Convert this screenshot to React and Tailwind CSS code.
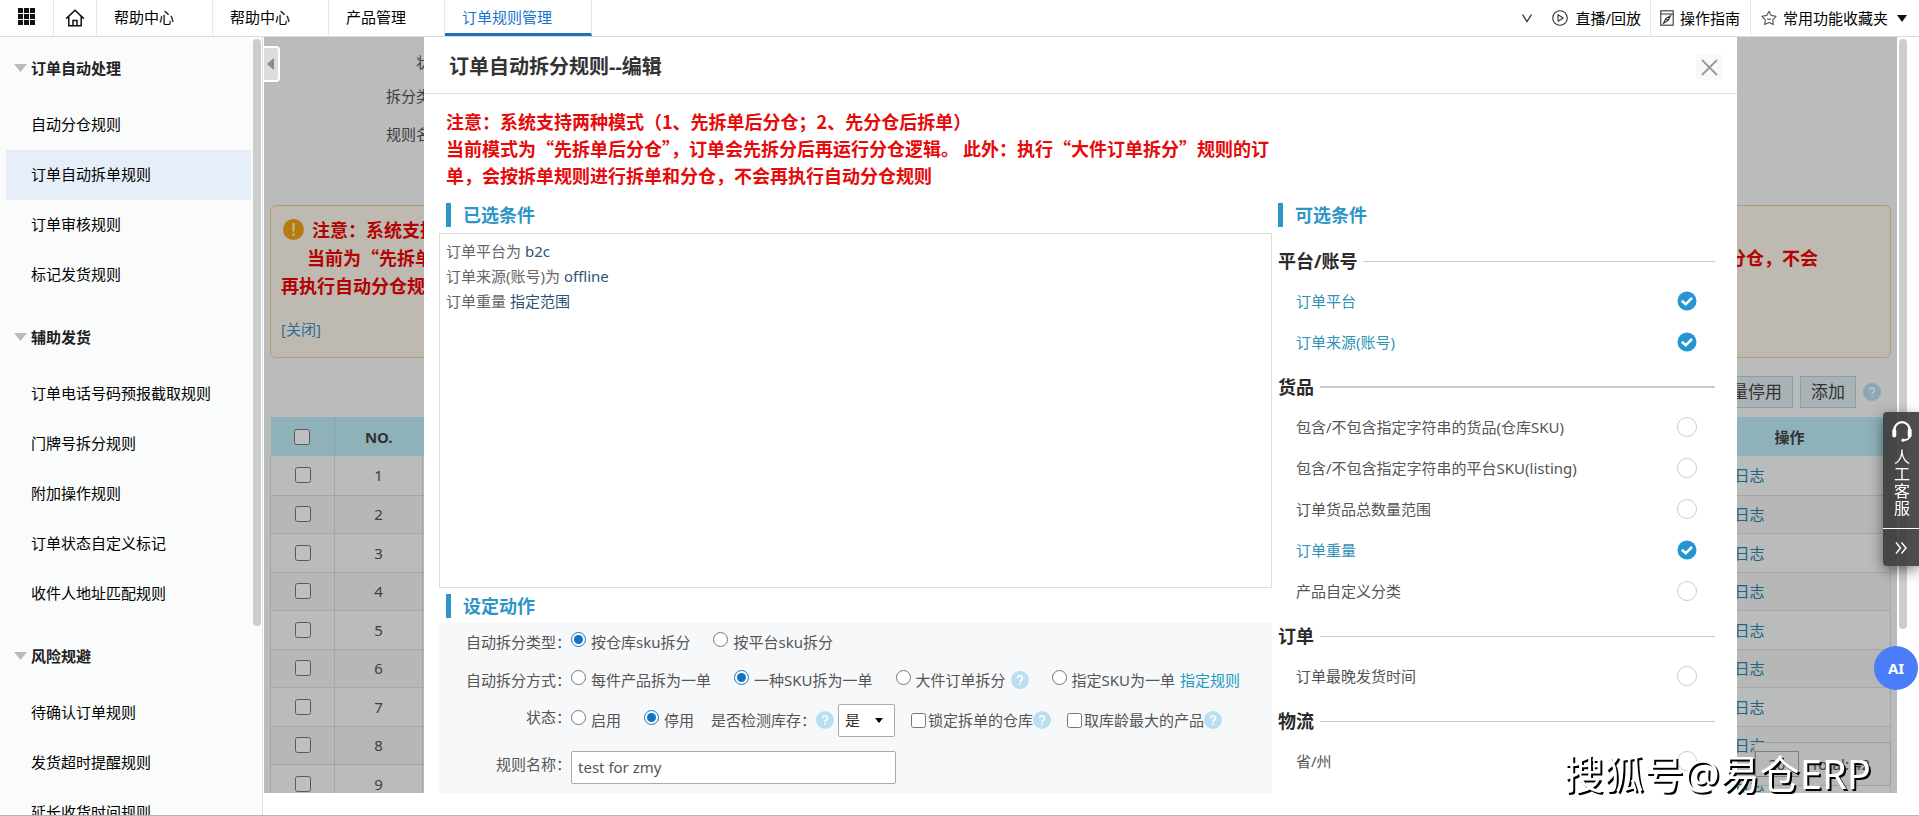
import { useState } from "react";

const tabs = ["帮助中心", "帮助中心", "产品管理"];

const menu = [
  {
    title: "订单自动处理",
    items: ["自动分仓规则", "订单自动拆单规则", "订单审核规则", "标记发货规则"],
  },
  {
    title: "辅助发货",
    items: [
      "订单电话号码预报截取规则",
      "门牌号拆分规则",
      "附加操作规则",
      "订单状态自定义标记",
      "收件人地址匹配规则",
    ],
  },
  {
    title: "风险规避",
    items: ["待确认订单规则", "发货超时提醒规则", "延长收货时间规则"],
  },
];

const conditionGroups = [
  { title: "平台/账号", items: ["订单平台", "订单来源(账号)"] },
  {
    title: "货品",
    thick: true,
    items: [
      "包含/不包含指定字符串的货品(仓库SKU)",
      "包含/不包含指定字符串的平台SKU(listing)",
      "订单货品总数量范围",
      "订单重量",
      "产品自定义分类",
    ],
  },
  { title: "订单", items: ["订单最晚发货时间"] },
  { title: "物流", items: ["省/州"] },
];

const rows = [1, 2, 3, 4, 5, 6, 7, 8, 9];

function HelpIcon() {
  return (
    <svg className="w-[18px] h-[18px] shrink-0" viewBox="0 0 18 18">
      <circle cx="9" cy="9" r="9" fill="#b9dff0" />
      <path
        d="M6.6 7.2a2.4 2.4 0 1 1 3.6 2c-.8.5-1.2.8-1.2 1.7"
        fill="none"
        stroke="#fff"
        strokeWidth="1.6"
      />
      <circle cx="9" cy="13" r="1" fill="#fff" />
    </svg>
  );
}

function Radio({ name, label, checked, onChange }) {
  return (
    <label className="flex items-center gap-[5px]">
      <input
        type="radio"
        name={name}
        checked={checked}
        onChange={onChange}
        className="w-[15px] h-[15px] mb-1.5 accent-[#1272c4]"
      />
      {label}
    </label>
  );
}

function SectionTitle({ children }) {
  return (
    <h3 className="flex items-center h-6 gap-3 text-lg font-bold text-[#2e95c8]">
      <span className="w-[5px] h-6 bg-[#2e95c8]" />
      {children}
    </h3>
  );
}

function TopBar() {
  return (
    <header className="flex h-[37px] shrink-0 border-b border-[#dcdcdc] bg-white text-black">
      <button aria-label="应用" className="w-[54px] pl-[18px] pb-1 border-r border-[#e6e6e6]">
        <svg className="w-[17px] h-[17px]" viewBox="0 0 17 17" fill="#111">
          {[0, 6, 12].map((y) =>
            [0, 6, 12].map((x) => <rect key={x + "-" + y} x={x} y={y} width="5" height="5" />)
          )}
        </svg>
      </button>
      <button aria-label="首页" className="w-[43px] flex items-center justify-center border-r border-[#e6e6e6]">
        <svg className="w-5 h-5" viewBox="0 0 20 20" fill="none" stroke="#111" strokeWidth="1.5">
          <path d="M1.2 10.6 10 2.2l8.8 8.4M3.8 8.6v9.2h12.4V8.6M8 17.6v-5.2h4v5.2" />
        </svg>
      </button>
      {tabs.map((tab, i) => (
        <button key={i} className="w-[116px] pl-[17px] pb-2 pt-1.5 text-left border-r border-[#e6e6e6]">
          {tab}
        </button>
      ))}
      <button className="w-[147px] pl-[17px] pb-1 pt-1 text-left text-[#1a75cc] border-r border-[#e6e6e6] border-b-3 border-b-[#1d72b8]">
        订单规则管理
      </button>
      <div className="flex-1" />
      <button aria-label="展开" className="px-5">
        <svg className="w-2.5 h-2.5" viewBox="0 0 10 10" fill="none" stroke="#333" strokeWidth="1.3">
          <path d="M0.5 1.5 5 8.5l4.500-7" />
        </svg>
      </button>
      <a href="#live" className="flex items-center gap-[7px] pr-[9px] border-r border-[#e6e6e6]">
        <svg className="w-4 h-4" viewBox="0 0 16 16" fill="none" stroke="#333" strokeWidth="1.1">
          <circle cx="8" cy="8" r="7.300" />
          <path d="M6 4.800 11.200 8 6 11.200z" strokeLinejoin="round" />
        </svg>
        直播/回放
      </a>
      <a href="#guide" className="flex items-center gap-1.5 pl-[9px] pr-2.5 border-r border-[#e6e6e6]">
        <svg className="w-[14px] h-4" viewBox="0 0 14 16" fill="none" stroke="#333" strokeWidth="1.1">
          <rect x="0.800" y="0.800" width="12.400" height="14.400" />
          <path d="M1 4h12M10.500 5.800 8.200 10.300 3.500 13.200l2.300-4.600zM5.800 8.600l2.400 1.700" />
        </svg>
        操作指南
      </a>
      <button className="flex items-center gap-1.5 pl-2.5 pr-3">
        <svg className="w-4 h-4" viewBox="0 0 16 16" fill="none" stroke="#555" strokeWidth="1.100" strokeLinejoin="round">
          <path d="M8 1.200 10.200 5.400l4.800.9-3.300 3.500.6 4.800L8 12.600l-4.300 2 .6-4.800L1 6.300l4.800-.9z" />
          <path d="M6 8.700c1.200.8 2.800.8 4 0" />
        </svg>
        常用功能收藏夹
        <svg className="w-2.5 h-[7px] ml-[3px]" viewBox="0 0 10 7" fill="#111">
          <path d="M0 0h10L5 7z" />
        </svg>
      </button>
    </header>
  );
}

function Sidebar() {
  return (
    <aside className="w-[263px] shrink-0 flex bg-[#fafbfb] border-r border-[#e2e2e2] overflow-hidden">
      <nav className="flex-1 -mt-1.5 pl-1.5 pr-0.5">
        {menu.map((group) => (
          <div key={group.title} className="pt-[7px]">
            <h2 className="flex items-center h-[62px] pb-0.5 pl-2 gap-1 font-bold text-[#222]">
              <svg className="w-[13px] h-2" viewBox="0 0 13 8" fill="#bbb">
                <path d="M0 0h13L6.500 8z" />
              </svg>
              {group.title}
            </h2>
            {group.items.map((item) => (
              <a
                key={item}
                href="#rule"
                className={`flex items-center h-[50px] pb-0.5 pl-[25px] text-black ${
                  item === "订单自动拆单规则" ? "bg-[#e6eff9]" : ""
                }`}
              >
                {item}
              </a>
            ))}
          </div>
        ))}
      </nav>
      {/* scrollbar */}
      <div className="w-[9px] pt-0.5 pr-px">
        <div className="h-[587px] rounded bg-[#cbcccc]" />
      </div>
    </aside>
  );
}

function RuleList() {
  return (
    <div className="h-full overflow-hidden bg-[#f8fafa] px-1.5 text-[#555]">
      <div className="w-[191px] h-[168px] pt-2 text-right">
        <p className="h-[34px] leading-[34px]">状态：</p>
        <p className="h-[34px] leading-[34px]">拆分类型：</p>
        <p className="h-[42px] leading-[42px]">规则名称：</p>
      </div>
      <div className="h-[153px] pt-[9px] px-2.5 rounded-md border border-[#efcf94] bg-[#fff8ec]">
        <div className="text-lg leading-7 font-bold text-[#f00505] font-['Noto_Sans_CJK_SC',sans-serif]">
          <p className="flex items-center pl-0.5 gap-2">
            <svg className="w-[21px] h-[21px]" viewBox="0 0 21 21">
              <circle cx="10.500" cy="10.500" r="10.500" fill="#f5a614" />
              <path d="M10.500 4v8.500M10.500 14.500v2.200" stroke="#fff8ec" strokeWidth="2" />
            </svg>
            注意：系统支持两种模式
          </p>
          <p className="flex justify-between pl-[26px] pr-[62px]">
            <span>当前为“先拆单后分仓”</span>
            <span>和分仓，不会</span>
          </p>
          <p>再执行自动分仓规则</p>
        </div>
        <a href="#close" className="block mt-3.5 leading-8 text-[#3f94c4]">
          [关闭]
        </a>
      </div>
      <div className="flex justify-end items-center h-[59px] pt-2 pr-2.5 gap-[7px] text-[17px] text-[#444]">
        <button className="h-8 px-2.5 border border-[#b4d3de] bg-[#e2eff2]">批量停用</button>
        <button className="h-8 px-2.5 border border-[#b4d3de] bg-[#e2eff2]">添加</button>
        <HelpIcon />
      </div>
      <table className="w-full table-fixed border-collapse">
        <thead>
          <tr className="h-[39px] bg-[#bfeef8] font-bold text-[#444]">
            <th className="w-16 border-r border-[#b4dbe4]">
              <input type="checkbox" aria-label="全选" className="block mx-auto w-4 h-4" />
            </th>
            <th className="w-[88px]">NO.</th>
            <th>规则名称</th>
            <th className="w-[202px]">操作</th>
          </tr>
        </thead>
        <tbody>
          {rows.map((n) => (
            <tr key={n} className="h-[39px] even:h-[38px] even:bg-[#f4f4f4] border-b border-[#dcdede]">
              <td className="border-x border-[#dcdede]">
                <input type="checkbox" aria-label={`选择 ${n}`} className="block mx-auto w-4 h-4" />
              </td>
              <td className="text-center border-r border-[#dcdede]">{n}</td>
              <td></td>
              <td className="pl-1 border-r border-[#dcdede]">
                <a href="#edit" className="mr-3 text-[#2888b5]">编辑</a>
                <a href="#log" className="text-[#2888b5]">日志</a>
              </td>
            </tr>
          ))}
        </tbody>
      </table>
    </div>
  );
}

function ActionPanel() {
  const [type, setType] = useState("按仓库sku拆分");
  const [mode, setMode] = useState("一种SKU拆为一单");
  const [status, setStatus] = useState("停用");
  const [name, setName] = useState("test for zmy");

  const radio = (group, label, value, set) => (
    <Radio name={group} label={label} checked={value === label} onChange={() => set(label)} />
  );

  return (
    <div className="bg-[#f7f8fa] text-[#555]">
      <div className="flex items-center h-[38px]">
        <span className="w-[132px] text-right">自动拆分类型：</span>
        <div className="flex gap-[23px]">
          {radio("type", "按仓库sku拆分", type, setType)}
          {radio("type", "按平台sku拆分", type, setType)}
        </div>
      </div>
      <div className="flex items-center h-[38px]">
        <span className="w-[132px] text-right">自动拆分方式：</span>
        <div className="flex items-center gap-[23px]">
          {radio("mode", "每件产品拆为一单", mode, setMode)}
          {radio("mode", "一种SKU拆为一单", mode, setMode)}
          <div className="flex items-center gap-[5px]">
            {radio("mode", "大件订单拆分", mode, setMode)}
            <HelpIcon />
          </div>
          <div className="flex items-center gap-[5px]">
            {radio("mode", "指定SKU为一单", mode, setMode)}
            <a href="#assign" className="text-[#1f9ac0]">指定规则</a>
          </div>
        </div>
      </div>
      <div className="flex items-center h-[42px]">
        <span className="w-[132px] pb-1.5 text-right">状态：</span>
        <div className="flex gap-[23px]">
          {radio("status", "启用", status, setStatus)}
          {radio("status", "停用", status, setStatus)}
        </div>
        <label htmlFor="stock" className="ml-[17px]">是否检测库存：</label>
        <HelpIcon />
        <div className="relative ml-1">
          <select
            id="stock"
            className="block w-[57px] h-[33px] pl-1.5 appearance-none rounded-xs border border-[#aaa] bg-white text-[#333]"
          >
            <option>是</option>
            <option>否</option>
          </select>
          <svg className="absolute right-3 top-3.5 w-2 h-[5px] pointer-events-none" viewBox="0 0 8 5">
            <path d="M0 0h8L4 5z" />
          </svg>
        </div>
        <label className="flex items-center ml-4">
          <input type="checkbox" className="w-[15px] h-[15px] mr-0.5" />
          锁定拆单的仓库
        </label>
        <HelpIcon />
        <label className="flex items-center ml-4">
          <input type="checkbox" className="w-[15px] h-[15px] mr-0.5" />
          取库龄最大的产品
        </label>
        <HelpIcon />
      </div>
      <div className="flex items-center h-[52px]">
        <label htmlFor="ruleName" className="w-[132px] pb-1.5 text-right">规则名称：</label>
        <input
          id="ruleName"
          type="text"
          value={name}
          onChange={(e) => setName(e.target.value)}
          className="w-[325px] h-[33px] px-1.5 rounded-xs border border-[#aaa] bg-white"
        />
      </div>
    </div>
  );
}

function ConditionList() {
  const [picked, setPicked] = useState(["订单平台", "订单来源(账号)", "订单重量"]);

  const toggle = (item) =>
    setPicked(picked.includes(item) ? picked.filter((p) => p !== item) : [...picked, item]);

  return (
    <div className="pt-[9px]">
      {conditionGroups.map((group) => (
        <div key={group.title} className="pt-1.5 pr-[22px]">
          <h4 className="flex items-center h-[38px] gap-1.5 text-lg font-bold text-[#2b2b2b]">
            {group.title}
            <span className={`flex-1 bg-[#ccc] ${group.thick ? "h-0.5" : "h-px"}`} />
          </h4>
          {group.items.map((item) => {
            const on = picked.includes(item);
            return (
              <label
                key={item}
                className={`flex items-center justify-between h-[41px] pl-[18px] pr-[18px] ${
                  on ? "text-[#2f93b5]" : "text-[#555]"
                }`}
              >
                {item}
                <input type="checkbox" className="sr-only" checked={on} onChange={() => toggle(item)} />
                {on ? (
                  <svg className="w-5 h-5" viewBox="0 0 20 20">
                    <circle cx="10" cy="10" r="9.500" fill="#2596d1" />
                    <path d="M4.800 9.800 8.700 13.300 15 6.800" fill="none" stroke="#fff" strokeWidth="2.600" />
                  </svg>
                ) : (
                  <span className="w-5 h-5 rounded-full border border-[#ccc]" />
                )}
              </label>
            );
          })}
        </div>
      ))}
    </div>
  );
}

function EditDialog() {
  return (
    <section role="dialog" aria-label="订单自动拆分规则--编辑" className="relative flex-1 flex flex-col mx-[160px] bg-white">
      <div className="flex items-center justify-between h-[57px] shrink-0 pl-[25px] pr-[15px] pt-1 border-b border-[#dedede]">
        <h2 className="text-xl font-bold text-[#333]">订单自动拆分规则--编辑</h2>
        <button aria-label="关闭" className="w-[26px] h-[26px] flex items-center justify-center bg-[#f8f8f8]">
          <svg className="w-[17px] h-[17px]" viewBox="0 0 17 17" stroke="#999" strokeWidth="1.800">
            <path d="M1 1l15 15M16 1 1 16" />
          </svg>
        </button>
      </div>
      <p className="mt-3.5 ml-[22px] text-lg leading-[27px] font-bold text-[#e60a0a] whitespace-nowrap font-['Noto_Sans_CJK_SC',sans-serif]">
        注意：系统支持两种模式（1、先拆单后分仓；2、先分仓后拆单）
        <br />
        当前模式为“先拆单后分仓”，订单会先拆分后再运行分仓逻辑。 此外：执行“大件订单拆分”规则的订
        <br />
        单，会按拆单规则进行拆单和分仓，不会再执行自动分仓规则
      </p>
      <div className="flex-1 min-h-0 flex gap-1.5 mt-3.5 pl-[15px]">
        <div className="flex-1 flex flex-col">
          <div className="pl-[7px]">
            <SectionTitle>已选条件</SectionTitle>
          </div>
          <div className="flex-1 mt-1.5 pt-[5px] pl-1.5 leading-[25px] border border-[#ddd] text-[#666]">
            <p>订单平台为 <span className="text-[#2c5377]">b2c</span></p>
            <p>订单来源(账号)为 <span className="text-[#2c5377]">offline</span></p>
            <p>订单重量 <span className="text-[#2c5377]">指定范围</span></p>
          </div>
          <div className="pl-[7px] mt-1.5 mb-[5px]">
            <SectionTitle>设定动作</SectionTitle>
          </div>
          <ActionPanel />
        </div>
        <div className="w-[459px] overflow-hidden">
          <SectionTitle>可选条件</SectionTitle>
          <ConditionList />
        </div>
      </div>
    </section>
  );
}

function ServiceBar() {
  return (
    <div className="fixed right-0 top-[412px] w-9 rounded-l bg-[#3a3a3a]/90 text-white shadow-[0_4px_14px_rgba(0,0,0,0.5)]">
      <button className="flex flex-col items-center w-full pt-2 pb-[11px] pl-0.5 border-b border-white text-base leading-[17px]">
        <svg className="w-[22px] h-[22px] mb-[7px]" viewBox="0 0 20 20" fill="none" stroke="#fff">
          <path d="M3 11V9a7 7 0 0 1 14 0v2" strokeWidth="2" />
          <path d="M3 9.500v4.500M17 9.500v4.500" strokeWidth="3.600" strokeLinecap="round" />
          <path d="M17 15c-.6 2.200-2.400 3.200-5.500 3.300" strokeWidth="1.500" />
          <circle cx="11" cy="18.300" r="1.500" fill="#fff" stroke="none" />
        </svg>
        <span className="w-4">人工客服</span>
      </button>
      <button aria-label="收起" className="flex items-center justify-center w-full h-[37px]">
        <svg className="w-3 h-3" viewBox="0 0 12 12" fill="none" stroke="#fff" strokeWidth="1.400">
          <path d="M1 .5 5.500 6 1 11.500M6.500.5 11 6l-4.500 5.500" />
        </svg>
      </button>
    </div>
  );
}

export default function App() {
  return (
    <div className="h-screen flex flex-col overflow-hidden bg-white border-b border-[#b5b5b5] text-[15px] leading-[22px] font-['Noto_Sans','Noto_Sans_CJK_SC',sans-serif]">
      <TopBar />
      <div className="flex-1 min-h-0 flex">
        <Sidebar />
        <main className="relative flex-1 min-w-0 ml-px mb-[22px]">
          <RuleList />
          {/* pager floats over the end of the table */}
          <div className="absolute right-1.5 bottom-[7px] flex items-center h-11 pr-5 gap-3 border border-[#d4d6d6] rounded bg-[#f4f6f6] text-[#555]">
            <select aria-label="每页条数" className="w-11 h-[26px] text-center appearance-none border border-[#aaa]">
              <option>20</option>
            </select>
            Total: 42
          </div>
          <div className="absolute inset-0 flex bg-black/25">
            <EditDialog />
          </div>
          <button aria-label="收起菜单" className="absolute left-0 top-[9px] w-4 h-9 flex items-center pl-[3px] border-2 border-l-0 border-white rounded-r bg-[#dcdcdc]">
            <svg className="w-[7px] h-3" viewBox="0 0 7 12" fill="#8a8a8a">
              <path d="M7 0v12L0 6z" />
            </svg>
          </button>
        </main>
        {/* page scrollbar */}
        <div className="w-[22px] pl-0.5 pt-0.5">
          <div className="w-2 h-[590px] rounded bg-[#cdcdcd]" />
        </div>
      </div>
      <ServiceBar />
      <button className="fixed right-px top-[646px] w-11 h-11 rounded-full bg-[#4b7dfa] text-white font-bold">
        AI
      </button>
      <div className="fixed right-12 bottom-[22px] text-[40px] leading-10 text-white [text-shadow:2px_2px_0_#000] pointer-events-none">
        搜狐号@易仓ERP
      </div>
    </div>
  );
}
